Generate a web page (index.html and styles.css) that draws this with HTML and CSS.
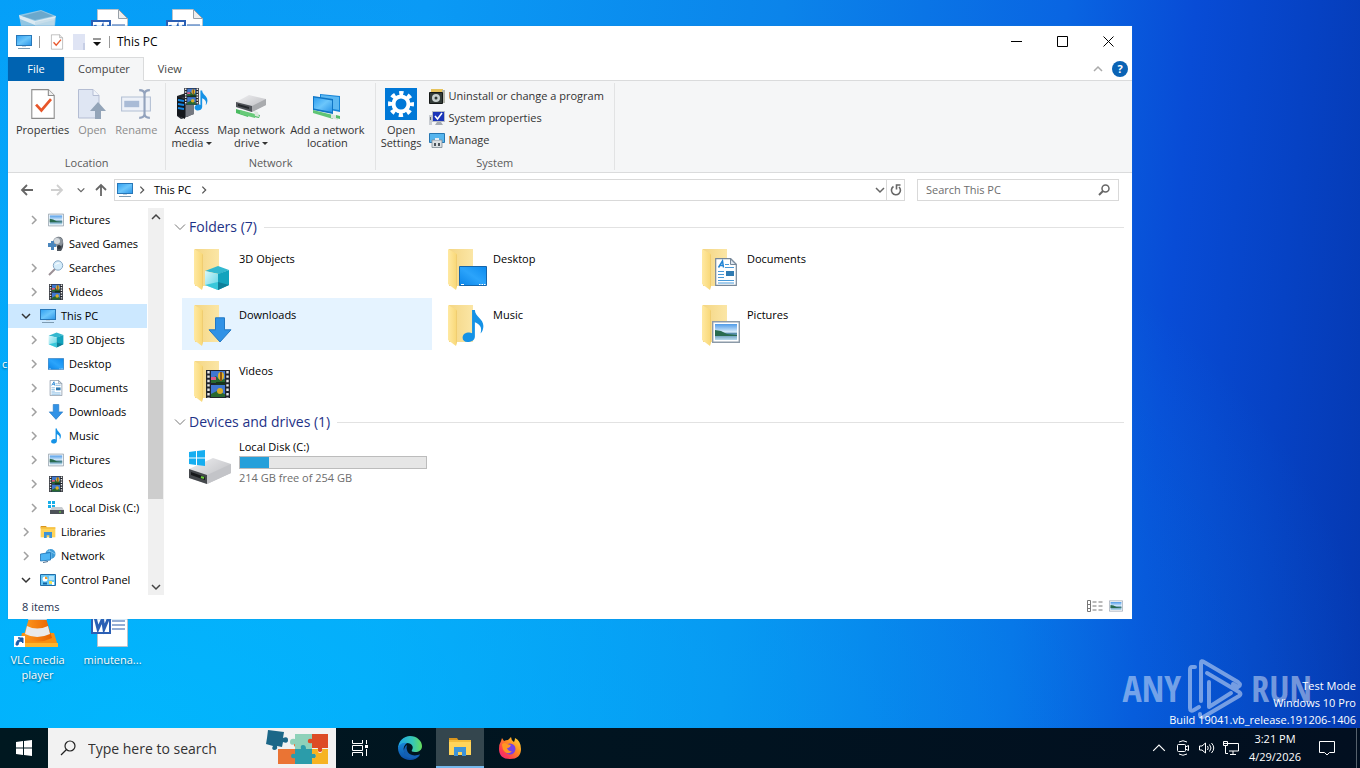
FILE: index.html
```html
<!DOCTYPE html>
<html lang="en">
<head>
    <meta charset="UTF-8">
    <meta name="viewport" content="width=device-width, initial-scale=1.0">
    <title>This PC</title>
    <link rel="stylesheet" href="styles.css">
</head>
<body>
    <!-- Icon sprite -->
    <svg class="sprite" aria-hidden="true">
        <defs>
            <linearGradient id="gScreen" x1="0" y1="0" x2="1" y2="1"><stop offset="0" stop-color="#2f9ff0"/><stop offset=".5" stop-color="#6cc6fb"/><stop offset="1" stop-color="#2b95e8"/></linearGradient>
            <linearGradient id="gBlue" x1="0" y1="1" x2="1" y2="0"><stop offset="0" stop-color="#0a84e8"/><stop offset=".5" stop-color="#2ba4fb"/><stop offset="1" stop-color="#0d8bee"/></linearGradient>
            <linearGradient id="gFolder" x1="0" y1="0" x2="1" y2="0"><stop offset="0" stop-color="#f4d684"/><stop offset="1" stop-color="#fbe6a6"/></linearGradient>
            <linearGradient id="gFlap" x1="0" y1="0" x2="1" y2="0"><stop offset="0" stop-color="#ffe9a2"/><stop offset="1" stop-color="#f8d775"/></linearGradient>
            <linearGradient id="gCube" x1="0" y1="0" x2="1" y2="1"><stop offset="0" stop-color="#d8f7fb"/><stop offset="1" stop-color="#59d3e4"/></linearGradient>
            <linearGradient id="gSky" x1="0" y1="0" x2="0" y2="1"><stop offset="0" stop-color="#4f9be8"/><stop offset=".5" stop-color="#d9ecfa"/><stop offset=".6" stop-color="#4d86a5"/><stop offset="1" stop-color="#b9dcf0"/></linearGradient>
            <linearGradient id="gDisk" x1="0" y1="0" x2="1" y2="1"><stop offset="0" stop-color="#f0f0f2"/><stop offset="1" stop-color="#b6b7bb"/></linearGradient>
            <linearGradient id="gEdge" x1="0" y1="0" x2="1" y2="0"><stop offset="0" stop-color="#1fa5e8"/><stop offset=".6" stop-color="#35c6b8"/><stop offset="1" stop-color="#66dd5c"/></linearGradient>
            <linearGradient id="gEdge2" x1="0" y1="0" x2="0" y2="1"><stop offset="0" stop-color="#1787d8"/><stop offset="1" stop-color="#0c4fa8"/></linearGradient>
            <linearGradient id="gFox" x1="1" y1="0" x2="0" y2="1"><stop offset="0" stop-color="#ffe23b"/><stop offset=".4" stop-color="#ff8f1f"/><stop offset=".75" stop-color="#ff3a52"/><stop offset="1" stop-color="#e6208c"/></linearGradient>
            <linearGradient id="gCone" x1="0" y1="0" x2="1" y2="0"><stop offset="0" stop-color="#ff9a1e"/><stop offset="1" stop-color="#e86200"/></linearGradient>
        </defs>
        <symbol id="monitor" viewBox="0 0 16 16">
            <rect x=".5" y="1.5" width="15" height="10" fill="url(#gScreen)" stroke="#2877b8"/>
            <path d="M6 12h4v1H6z" fill="#c6d5e0"/><path d="M2 14.5h12" stroke="#7d9bb2"/>
        </symbol>
        <symbol id="pagecheck" viewBox="0 0 24 30">
            <path d="M1.5 1.5H17l5.5 5.5v21.5h-21z" fill="#fff" stroke="#8b8b8b"/>
            <path d="M17 1.5V7h5.5" fill="#eee" stroke="#8b8b8b"/>
            <path d="M5.5 15.5l5 5.5 9-10.5" fill="none" stroke="#e8562a" stroke-width="2.5"/>
        </symbol>
        <symbol id="pageopen" viewBox="0 0 30 32">
            <path d="M1.5 1.5H16l6 6v22.5H1.5z" fill="#dfe6f3" stroke="#b4bdd3"/>
            <path d="M16 1.5v6h6" fill="#f1f4fa" stroke="#b4bdd3"/>
            <path d="M21 14l8 9h-5v8h-6v-8h-5z" fill="#93a4b8"/>
        </symbol>
        <symbol id="rename" viewBox="0 0 30 30">
            <path d="M1.5 8.5h27v13h-27z" fill="#edf1f8" stroke="#b2bfd4"/>
            <path d="M4 12h14v6H4z" fill="#a9bbd6"/>
            <path d="M18 2q5 0 5 4 0-4 5-4M18 28q5 0 5-4 0 4 5 4M23 5v20" fill="none" stroke="#93a3bd" stroke-width="2"/>
        </symbol>
        <symbol id="film" viewBox="0 0 24 28">
            <path d="M0 0h24v28H0z" fill="#20242c"/>
            <path d="M5 1h14v12H5z" fill="#3f77d0"/><path d="M5 15h14v12H5z" fill="#3f77d0"/>
            <path d="M5 9l5-3 4 4 5-1v4H5z" fill="#28682f"/><path d="M5 24l6-3 8 3v3H5z" fill="#28682f"/>
            <path d="M5 7h5v3H5z" fill="#dd5b86"/><ellipse cx="15" cy="6" rx="3" ry="4" fill="#e4b628"/><path d="M14 2h2v9h-2z" fill="#8a5518"/>
            <ellipse cx="14" cy="21" rx="3" ry="3" fill="#d9ad27"/><path d="M10 12h9v3h-9z" fill="#17351b"/>
            <path d="M2.5 1v27M21.5 1v27" stroke="#e9e9e9" stroke-width="2.4" stroke-dasharray="2.4 2"/>
        </symbol>
        <symbol id="note" viewBox="0 0 24 36">
            <path d="M11 1h3c0 7 9 9 9 17 0 3-1 6-3 8 2-7-1-10-6-12v15c0 4-4 6-8 6-3 0-5-2-5-4.5C1 27 4 25 8 25c1 0 2 .3 3 .7z" fill="#1592e6"/>
        </symbol>
        <symbol id="media" viewBox="0 0 32 32">
            <path d="M1 8l12-4v24L5 31l-4-3z" fill="#22262d"/><path d="M5 10l13-4v20L5 31z" fill="#43474f"/>
            <path d="M1 9l8 2v20l-8-4z" fill="#14171c"/><path d="M2 12l6 1M2 16l6 1M2 20l6 1" stroke="#1587e4" stroke-width="2"/><path d="M10 9l8-3v20l-8 3z" fill="#757981"/>
            <svg x="8" y="0" width="15" height="17"><use href="#film"/></svg>
            <svg x="18" y="1" width="14" height="23"><use href="#note"/></svg>
        </symbol>
        <symbol id="netdrive" viewBox="0 0 32 24">
            <path d="M1 8L14 1l17 4v6l-14 7L1 13z" fill="url(#gDisk)"/><path d="M1 8l16 4v6L1 13z" fill="#505359"/><path d="M3 10l11 3v2L3 12z" fill="#23262a"/>
            <path d="M17 12l14-7v6l-14 7z" fill="#a9abae"/>
            <path d="M1 15l13 4-1 4-12-4zM20 20l5 1-1 3-5-1z" fill="#4bbb62"/><path d="M5 16l15 4v4L5 20z" fill="#68ca79"/><path d="M19 17l4 1 1 5-4-1z" fill="#dce6dd"/>
        </symbol>
        <symbol id="netplace" viewBox="0 0 30 28">
            <path d="M8 2l20 2v16l-20-4z" fill="#1685d8"/><path d="M9 3l18 2v13L9 15z" fill="#5cb8f2"/>
            <path d="M1 4l20 3v15L1 18z" fill="#0f75c5"/><path d="M2 5.5l18 3V20L2 16.5z" fill="url(#gScreen)"/>
            <path d="M1 18l20 5v4L1 21z" fill="#5fc575"/><path d="M19 22l7 2v4l-7-2z" fill="#dbe5dc"/><path d="M24 23l4 1v3l-4-1z" fill="#57bd6c"/>
        </symbol>
        <symbol id="gear" viewBox="0 0 32 32">
            <path d="M0 0h32v32H0z" fill="#0078d7"/>
            <circle cx="16" cy="16" r="7.5" fill="none" stroke="#fff" stroke-width="4"/>
            <circle cx="16" cy="16" r="10.8" fill="none" stroke="#fff" stroke-width="4.4" stroke-dasharray="4.24 4.24" stroke-dashoffset="2.1"/>
        </symbol>
        <symbol id="uninstall" viewBox="0 0 16 16">
            <path d="M2 1h12v3H2z" fill="#e6c35c"/><path d="M13 2h3v13h-3z" fill="#b4b6ad"/><path d="M.5 4.5h13v11H.5z" fill="#333b38" stroke="#151817"/>
            <circle cx="7" cy="10" r="4" fill="#c9d1cf"/><circle cx="7" cy="10" r="1.5" fill="#333b38"/>
        </symbol>
        <symbol id="sysprops" viewBox="0 0 16 16">
            <path d="M3.5 1.5h12v10h-12z" fill="#1b35b8" stroke="#b9bdc4"/><path d="M6 6l2.5 3L13 3" fill="none" stroke="#fff" stroke-width="1.6"/>
            <path d="M8 12h4l2 3H6z" fill="#a5abb3"/><path d="M0 5h3v10H0z" fill="#c8ccd1"/><path d="M1 7h1v3H1z" fill="#666"/>
        </symbol>
        <symbol id="manage" viewBox="0 0 16 16">
            <path d="M.5 1.5h15v9H.5z" fill="#55b5ee" stroke="#2677b2"/>
            <path d="M3 8h10v7.5H3z" fill="#dce1e4" stroke="#7e8b94" stroke-width=".8"/><path d="M6 6h4v2H6z" fill="#e9eef1"/><path d="M5 11h2v3H5zM9 11h2v3H9z" fill="#4d555c"/>
        </symbol>
        <symbol id="picture" viewBox="0 0 28 22">
            <path d="M.7.7h26.6v20.6H.7z" fill="#fff" stroke="#8c9aa8" stroke-width="1.4"/><path d="M3 3h22v16H3z" fill="url(#gSky)"/>
            <path d="M3 9l6 1 6 3 10 1v1H3z" fill="#286b4f"/>
        </symbol>
        <symbol id="games" viewBox="0 0 16 16">
            <path d="M9 1q5-1 6 4 1 6-2 10l-4 0z" fill="#4d545c"/><circle cx="10" cy="6" r="5" fill="#8b939b"/><circle cx="9" cy="5" r="3" fill="#d3d9de"/>
            <path d="M0 7h3V5h3v3h2v3H6v3H3v-3H0z" fill="#4a86bd"/><circle cx="11" cy="11" r="2" fill="#2f343b"/>
        </symbol>
        <symbol id="searches" viewBox="0 0 16 16">
            <path d="M1 15l6-6" stroke="#9a8f95" stroke-width="2"/><circle cx="10" cy="5.5" r="4.7" fill="#d5ecfa" stroke="#88a9c6"/><path d="M7.5 5q1-2.5 4-2" fill="none" stroke="#fff"/>
        </symbol>
        <symbol id="cube" viewBox="0 0 26 26">
            <path d="M1 6L14 1l11 4-10 4z" fill="#33b8cf"/><path d="M1 6l13 3v16L1 20z" fill="url(#gCube)"/><path d="M14 9l11-4v15l-11 5z" fill="#13a3bd"/><path d="M14 17l11 3-11 5z" fill="#0e7f99"/><path d="M1 20l13-3v8z" fill="#38c7da"/>
        </symbol>
        <symbol id="desk" viewBox="0 0 28 20">
            <path d="M.5.5h27v19H.5z" fill="url(#gBlue)" stroke="#1565ab"/><path d="M2 18.5h3M20 18.5h1.5M22.5 18.5H24M25 18.5h1.5" stroke="#fff"/>
        </symbol>
        <symbol id="doc" viewBox="0 0 22 28">
            <path d="M.7.7h15l5.6 5.6v21H.7z" fill="#fff" stroke="#768799" stroke-width="1.2"/><path d="M15.5 1v5.5H21z" fill="#dfe7ef" stroke="#768799"/>
            <path d="M3.5 9.5L7.5 3l1 6.5M5 7.5h3.5" fill="none" stroke="#2083d4" stroke-width="1.5"/>
            <path d="M10 6.5h4M10 9.5h9M3 13.5h6M3 16.5h6M3 19.5h6M3 22.5h16M3 25h16" stroke="#4a9ad8"/><path d="M11 13h8v5h-8z" fill="#2f7ab1"/>
        </symbol>
        <symbol id="down" viewBox="0 0 24 26">
            <path d="M7.5.8h9v12h6.5L12 25 1 12.8h6.5z" fill="#3192e6" stroke="#2278c4"/>
        </symbol>
        <symbol id="winlogo" viewBox="0 0 16 16">
            <path d="M0 2l7-1v6.5H0zM8 .9L16 0v7.5H8zM0 8.5h7V15l-7-1zM8 8.5h8V16l-8-.9z"/>
        </symbol>
        <symbol id="disk" viewBox="0 0 48 40">
            <path d="M2 22L26 11l18 6v9L20 37 2 31z" fill="url(#gDisk)"/><path d="M2 22l18 6v9L2 31z" fill="#45484c"/><path d="M20 28l24-11v9L20 37z" fill="#c3c4c8"/>
            <path d="M4 25l14 5v3L4 28z" fill="#17191b"/><path d="M14 30l3 1" stroke="#6fd23c" stroke-width="2"/>
            <svg x="2" y="3" width="16" height="16" fill="#16aef0"><use href="#winlogo"/></svg>
        </symbol>
        <symbol id="disksmall" viewBox="0 0 16 16">
            <path d="M0 1h3v3H0zM4 1h3v3H4zM0 5h3v3H0zM4 5h3v3H4z" fill="#18aee8"/><path d="M2 10l2-3h10l2 3z" fill="#c8cbcf"/><path d="M2 10h14v4H2z" fill="#4d5258"/><path d="M11 12h2" stroke="#6de03e"/>
        </symbol>
        <symbol id="library" viewBox="0 0 24 20">
            <path d="M1 1h8l2 3H1z" fill="#d9951d"/><path d="M1 3h22v15H1z" fill="#ffd45a"/><path d="M1 3h22v2H1z" fill="#f3bc3b"/><path d="M6 19v-9h12v9h-4v-4h-4v4z" fill="#3d93d8"/>
        </symbol>
        <symbol id="network" viewBox="0 0 16 16">
            <circle cx="10.5" cy="6" r="5" fill="#3d9bd8"/><path d="M7 3q4 0 8 3M9 1q3 5 2 9" fill="none" stroke="#7cc3ec"/>
            <path d="M.5 6l10-1.5V12L.5 13z" fill="#4cb4f4" stroke="#1d71b3" stroke-width=".8"/><path d="M3 14.5l5-1" stroke="#4b6f91"/>
        </symbol>
        <symbol id="control" viewBox="0 0 16 14">
            <path d="M.5 1.5h15v11H.5z" fill="#64c5f5" stroke="#236ea8"/><circle cx="5" cy="6" r="2.5" fill="#fff"/><path d="M5 6V3.5A2.5 2.5 0 0 1 7.5 6z" fill="#f29b27"/>
            <path d="M9 4h5M9 6h5" stroke="#fff"/><path d="M3 10.5h4" stroke="#1464a2" stroke-width="2"/><path d="M9 8h3v3H9z" fill="#f3e15a"/><path d="M12 9h2v3h-2z" fill="#fff"/>
        </symbol>
        <symbol id="folder" viewBox="0 0 48 48">
            <path d="M8 3h24v37H8z" fill="url(#gFolder)"/><path d="M7 3l9 5v32l-1 4-8-6z" fill="url(#gFlap)"/><path d="M15 8v35l1-4V9z" fill="#f0cd70"/>
        </symbol>
        <symbol id="chev-r" viewBox="0 0 12 12"><path d="M4 2l4 4-4 4" fill="none" stroke="currentColor" stroke-width="1.5"/></symbol>
        <symbol id="chev-d" viewBox="0 0 12 12"><path d="M2 4l4 4 4-4" fill="none" stroke="currentColor" stroke-width="1.5"/></symbol>
        <symbol id="chev-u" viewBox="0 0 12 12"><path d="M2 8l4-4 4 4" fill="none" stroke="currentColor" stroke-width="1.5"/></symbol>
        <symbol id="arrow" viewBox="0 0 14 14"><path d="M13 7H2M7 2L2 7l5 5" fill="none" stroke="currentColor" stroke-width="1.8"/></symbol>
        <symbol id="loupe" viewBox="0 0 16 16"><circle cx="10" cy="6" r="5" fill="none" stroke="currentColor" stroke-width="1.2"/><path d="M6.500 9.500L1 15" stroke="currentColor" stroke-width="1.2"/></symbol>
        <symbol id="word" viewBox="0 0 48 48">
            <path d="M8.5 1.5h21l9 9V46.5h-30z" fill="#fff" stroke="#b9c3cc"/><path d="M29.5 1.5v9h9z" fill="#eee" stroke="#98a0a8"/>
            <path d="M23 17h13M23 21h13M23 25h13M23 29h13" stroke="#2a5caa" stroke-width="1.2"/>
            <path d="M2 12h20v22H2z" fill="#2b5fb4"/><path d="M4 14h18v18H4z" fill="#fff"/>
            <path d="M6 17l3 12 4.5-10 1.5 10 5-12" fill="none" stroke="#2b5fb4" stroke-width="3"/><path d="M20 12h2v22h-2z" fill="#2b5fb4"/>
        </symbol>
        <symbol id="bin" viewBox="0 0 48 48">
            <path d="M5 7l22-5 15 6-4 38H12z" fill="#9fc9e0" opacity=".9"/><path d="M5 7l16 6 21-5-2 4-19 5L6 11z" fill="#dceaf2"/><path d="M8 8l19-5 12 5-18 4z" fill="#6ba8cc"/><path d="M21 14v32l17-4 3-32z" fill="#c2dbe8" opacity=".8"/>
        </symbol>
        <symbol id="cone" viewBox="0 0 48 48">
            <path d="M8 33h32l4 13H5z" fill="#f79013"/><path d="M5 43h39v4H5z" fill="#ffb52b"/><path d="M20 2h7l11 36q-14 7-29 0z" fill="url(#gCone)"/>
            <path d="M17 12h13l3 8H14zM13 26q10 5 21 0l2 8q-13 6-25 0z" fill="#eaeaea"/>
            <path d="M0 36h11v11H0z" fill="#fff"/><path d="M2 45q0-5 4-5v-2h-2 5v5l-2-2q-3 0-3 4z" fill="#1b5aa8" stroke="#1b5aa8"/>
        </symbol>
    </svg>

    <main class="desktop">
        <!-- Desktop icons -->
        <div class="shortcuts">
            <a class="shortcut" href="#"><svg class="i48"><use href="#bin"/></svg></a>
            <a class="shortcut" href="#"><svg class="i48"><use href="#word"/></svg></a>
            <a class="shortcut" href="#"><svg class="i48"><use href="#word"/></svg></a>
            <a class="shortcut cut" href="#">c</a>
            <a class="shortcut" href="#"><svg class="i48"><use href="#cone"/></svg>VLC media player</a>
            <a class="shortcut" href="#"><svg class="i48"><use href="#word"/></svg>minutena...</a>
        </div>

        <!-- Explorer window -->
        <section class="window">
            <header class="titlebar">
                <svg class="i16"><use href="#monitor"/></svg>
                <span class="sep"></span>
                <button class="quick" aria-label="Properties"><svg class="i16"><use href="#pagecheck"/></svg></button>
                <button class="quick" aria-label="New folder"><svg class="i16" viewBox="0 0 16 16"><path d="M2 0h12v16H2z" fill="#dfe4f4"/><path d="M12 9h2v7h-2z" fill="#c6cee5"/></svg></button>
                <button class="quick narrow" aria-label="Customize"><svg width="8" height="8" viewBox="0 0 8 8"><path d="M0 1h8" stroke="#333"/><path d="M0 4h8L4 8z" fill="#111"/></svg></button>
                <span class="sep"></span>
                <h1>This PC</h1>
                <div class="controls">
                    <button aria-label="Minimize"><svg width="11" height="11"><path d="M0 5.5h11" stroke="#000"/></svg></button>
                    <button aria-label="Maximize"><svg width="11" height="11"><path d="M.5.5h10v10H.5z" fill="none" stroke="#000"/></svg></button>
                    <button aria-label="Close"><svg width="11" height="11"><path d="M.5.5l10 10M10.5.5l-10 10" stroke="#000"/></svg></button>
                </div>
            </header>

            <nav class="tabs">
                <button class="tab file">File</button>
                <button class="tab active">Computer</button>
                <button class="tab">View</button>
                <button class="collapse" aria-label="Collapse ribbon"><svg class="i12"><use href="#chev-u"/></svg></button>
                <button class="help" aria-label="Help">?</button>
            </nav>

            <div class="ribbon">
                <div class="group">
                    <div class="group-body wide">
                        <button class="big"><svg class="i32"><use href="#pagecheck"/></svg>Properties</button>
                        <button class="big" disabled><svg class="i32"><use href="#pageopen"/></svg>Open</button>
                        <button class="big" disabled><svg class="i32"><use href="#rename"/></svg>Rename</button>
                    </div>
                    <span class="group-name">Location</span>
                </div>
                <div class="group">
                    <div class="group-body">
                        <button class="big"><svg class="i32"><use href="#media"/></svg>Access<span>media <i class="caret"></i></span></button>
                        <button class="big"><svg class="i32 low"><use href="#netdrive"/></svg>Map network<span>drive <i class="caret"></i></span></button>
                        <button class="big"><svg class="i32 low"><use href="#netplace"/></svg>Add a network<span>location</span></button>
                    </div>
                    <span class="group-name">Network</span>
                </div>
                <div class="group">
                    <div class="group-body">
                        <button class="big"><svg class="i32"><use href="#gear"/></svg>Open<span>Settings</span></button>
                        <div class="small-list">
                            <button><svg class="i16"><use href="#uninstall"/></svg>Uninstall or change a program</button>
                            <button><svg class="i16"><use href="#sysprops"/></svg>System properties</button>
                            <button><svg class="i16"><use href="#manage"/></svg>Manage</button>
                        </div>
                    </div>
                    <span class="group-name">System</span>
                </div>
            </div>

            <div class="address-row">
                <button class="nav" aria-label="Back"><svg class="i14"><use href="#arrow"/></svg></button>
                <button class="nav off forward" aria-label="Forward"><svg class="i14"><use href="#arrow"/></svg></button>
                <button class="nav recent" aria-label="Recent locations"><svg class="i10"><use href="#chev-d"/></svg></button>
                <button class="nav up" aria-label="Up"><svg class="i14"><use href="#arrow"/></svg></button>
                <div class="address">
                    <svg class="i16"><use href="#monitor"/></svg>
                    <svg class="i10 crumb-sep"><use href="#chev-r"/></svg>
                    <a href="#">This PC</a>
                    <svg class="i10 crumb-sep"><use href="#chev-r"/></svg>
                    <button class="drop" aria-label="Previous locations"><svg class="i12"><use href="#chev-d"/></svg></button>
                    <button class="refresh" aria-label="Refresh"><svg class="i12" viewBox="0 0 12 12"><path d="M3.500 2.500A4.500 4.500 0 1 0 9 3" fill="none" stroke="#666" stroke-width="1.6"/><path d="M10.500 1H6.500v4.500" fill="none" stroke="#666" stroke-width="1.6"/></svg></button>
                </div>
                <div class="search">
                    <input type="text" placeholder="Search This PC" aria-label="Search This PC">
                    <svg class="i12" viewBox="0 0 12 12" fill="none" stroke="currentColor"><circle cx="7.5" cy="4.5" r="3.5" stroke-width="1.5"/><path d="M5 7l-4 4" stroke-width="2"/></svg>
                </div>
            </div>

            <div class="body">
                <nav class="tree">
                    <a class="sub" href="#"><svg class="i12"><use href="#chev-r"/></svg><svg class="i16"><use href="#picture"/></svg>Pictures</a>
                    <a class="sub" href="#"><svg class="i12"></svg><svg class="i16"><use href="#games"/></svg>Saved Games</a>
                    <a class="sub" href="#"><svg class="i12"><use href="#chev-r"/></svg><svg class="i16"><use href="#searches"/></svg>Searches</a>
                    <a class="sub" href="#"><svg class="i12"><use href="#chev-r"/></svg><svg class="i16"><use href="#film"/></svg>Videos</a>
                    <a class="open selected" href="#"><svg class="i12"><use href="#chev-d"/></svg><svg class="i16"><use href="#monitor"/></svg>This PC</a>
                    <a class="sub" href="#"><svg class="i12"><use href="#chev-r"/></svg><svg class="i16"><use href="#cube"/></svg>3D Objects</a>
                    <a class="sub" href="#"><svg class="i12"><use href="#chev-r"/></svg><svg class="i16"><use href="#desk"/></svg>Desktop</a>
                    <a class="sub" href="#"><svg class="i12"><use href="#chev-r"/></svg><svg class="i16"><use href="#doc"/></svg>Documents</a>
                    <a class="sub" href="#"><svg class="i12"><use href="#chev-r"/></svg><svg class="i16"><use href="#down"/></svg>Downloads</a>
                    <a class="sub" href="#"><svg class="i12"><use href="#chev-r"/></svg><svg class="i16"><use href="#note"/></svg>Music</a>
                    <a class="sub" href="#"><svg class="i12"><use href="#chev-r"/></svg><svg class="i16"><use href="#picture"/></svg>Pictures</a>
                    <a class="sub" href="#"><svg class="i12"><use href="#chev-r"/></svg><svg class="i16"><use href="#film"/></svg>Videos</a>
                    <a class="sub" href="#"><svg class="i12"><use href="#chev-r"/></svg><svg class="i16"><use href="#disksmall"/></svg>Local Disk (C:)</a>
                    <a href="#"><svg class="i12"><use href="#chev-r"/></svg><svg class="i16"><use href="#library"/></svg>Libraries</a>
                    <a href="#"><svg class="i12"><use href="#chev-r"/></svg><svg class="i16"><use href="#network"/></svg>Network</a>
                    <a class="open" href="#"><svg class="i12"><use href="#chev-d"/></svg><svg class="i16"><use href="#control"/></svg>Control Panel</a>
                </nav>
                <div class="scrollbar">
                    <button aria-label="Scroll up"><svg class="i12"><use href="#chev-u"/></svg></button>
                    <div class="track"><div class="thumb"></div></div>
                    <button aria-label="Scroll down"><svg class="i12"><use href="#chev-d"/></svg></button>
                </div>

                <div class="content">
                    <h2><svg class="i12" viewBox="0 0 12 12"><path d="M1 3.5l5 5 5-5" fill="none" stroke="currentColor"/></svg>Folders (7)</h2>
                    <div class="tiles">
                        <a class="tile" href="#"><svg class="i48" viewBox="0 0 48 48"><use href="#folder"/><svg x="17" y="19" width="26" height="26"><use href="#cube"/></svg></svg>3D Objects</a>
                        <a class="tile" href="#"><svg class="i48" viewBox="0 0 48 48"><use href="#folder"/><svg x="18" y="20" width="28" height="20"><use href="#desk"/></svg></svg>Desktop</a>
                        <a class="tile" href="#"><svg class="i48" viewBox="0 0 48 48"><use href="#folder"/><svg x="20" y="12" width="22" height="28"><use href="#doc"/></svg></svg>Documents</a>
                        <a class="tile hover" href="#"><svg class="i48" viewBox="0 0 48 48"><use href="#folder"/><svg x="21" y="15" width="24" height="26"><use href="#down"/></svg></svg>Downloads</a>
                        <a class="tile" href="#"><svg class="i48" viewBox="0 0 48 48"><use href="#folder"/><svg x="20" y="7" width="24" height="34"><use href="#note"/></svg></svg>Music</a>
                        <a class="tile" href="#"><svg class="i48" viewBox="0 0 48 48"><use href="#folder"/><svg x="17" y="19" width="28" height="22"><use href="#picture"/></svg></svg>Pictures</a>
                        <a class="tile" href="#"><svg class="i48" viewBox="0 0 48 48"><use href="#folder"/><svg x="19" y="12" width="24" height="28"><use href="#film"/></svg></svg>Videos</a>
                    </div>
                    <h2><svg class="i12" viewBox="0 0 12 12"><path d="M1 3.5l5 5 5-5" fill="none" stroke="currentColor"/></svg>Devices and drives (1)</h2>
                    <div class="tiles">
                        <div class="tile drive">
                            <svg class="i48"><use href="#disk"/></svg>
                            <div class="drive-info">
                                <label for="usage">Local Disk (C:)</label>
                                <progress id="usage" max="254" value="40"></progress>
                                <span>214 GB free of 254 GB</span>
                            </div>
                        </div>
                    </div>
                </div>
            </div>

            <footer class="status">
                <span>8 items</span>
                <button aria-label="Details view"><svg width="16" height="12" viewBox="0 0 16 12"><path d="M.5.5h3v11h-3zM.5 4.5h3M.5 8.5h3" fill="none" stroke="#777"/><path d="M5.5 2h4M11.5 2h4M5.5 6h4M11.5 6h4M5.5 10h4M11.5 10h4" stroke="#777"/></svg></button>
                <button aria-label="Large icons"><svg width="14" height="12"><use href="#picture"/></svg></button>
            </footer>
        </section>

        <!-- Watermark -->
        <div class="watermark">
            <span>ANY</span>
            <svg width="58" height="62" viewBox="0 0 58 62" fill="none" stroke="currentColor" stroke-width="4" stroke-linejoin="round" stroke-linecap="round">
                <path d="M8 9H5q-2 0-2 3v38q0 4 4 2l5-3M14 43V5q0-3 3-1l34 20q4 3 0 5l-5-3M20 15l32 19q3 2 0 4L18 58q-5 3-5-2M22 24v25l22-14"/>
            </svg>
            <span>RUN</span>
        </div>
        <div class="build">
            <p>Test Mode</p>
            <p>Windows 10 Pro</p>
            <p>Build 19041.vb_release.191206-1406</p>
        </div>
    </main>

    <footer class="taskbar">
        <button class="task" aria-label="Start"><svg class="i16" fill="#fff"><use href="#winlogo"/></svg></button>
        <div class="task-search">
            <svg class="i16"><use href="#loupe"/></svg>
            <input type="text" placeholder="Type here to search" aria-label="Type here to search">
            <svg width="64" height="36" viewBox="0 0 64 36">
                <path d="M13 19h17v-2q-3-3 1-5 5-1 4 3-1 2 1 3v16H13z" fill="#ea7434"/>
                <path d="M30 4h17v15H30v-5q-5 2-5-2t5-3z" fill="#8ed1b9"/>
                <path d="M47 4h16v14h-6q1 4-2 4t-2-4h-6v-5q-5 1-4-3 1-2 4-1z" fill="#dd4b26"/>
                <path d="M30 19h6q-1-4 2-4t3 4h6v5q4-2 4 2t-4 2v6H30v-6q-4 1-4-2t4-2z" fill="#2b9caa"/>
                <path d="M47 19h6q-1 4 2 4t2-4h6v15H47v-6q4 1 4-2t-4-2z" fill="#f6b322"/>
                <path d="M3 0l16 2-1 6q5-2 5 2t-5 2l-1 5-5-1q1 4-3 4-3-1-1-4l-7-2 1-6z" fill="#1c6788"/>
            </svg>
        </div>
        <button class="task" aria-label="Task view"><svg class="i16" viewBox="0 0 16 16" fill="none" stroke="#fff"><path d="M.5 0v3.5h10V0M.5 16v-3.5h10V16M.5 5.5h10v5H.5zM14.5 0v4M14.5 9v7"/><path d="M13 5h3v3h-3z" fill="#fff" stroke="none"/></svg></button>
        <button class="task" aria-label="Edge"><svg class="i24" viewBox="0 0 24 24">
            <path d="M0 13C0 5 6 0 12 0c7 0 12 5 12 10 0 4-3 6-7 6-3 0-4-1-3-2 2-3 0-7-5-7-5 0-8 3-9 6z" fill="url(#gEdge)"/>
            <path d="M0 12c1-4 5-6 9-5-3 2-4 5-3 8 1 4 5 6 9 6 3 0 5-1 7-2-2 3-6 5-10 5C5 24 0 19 0 12z" fill="url(#gEdge2)"/>
            <path d="M9 9c-3 2-4 6-2 10 2 3 6 4 9 3 3 0 5-2 6-4-5 3-12 1-13-4-1-2 0-4 0-5z" fill="#1460b4"/>
        </svg></button>
        <button class="task running" aria-label="File Explorer"><svg class="i24"><use href="#library"/></svg></button>
        <button class="task" aria-label="Firefox"><svg class="i24" viewBox="0 0 24 24">
            <path d="M3 5l1-3 2 3q2-1 4-1l3-3q0 3 3 5 1-2 1-4 6 3 6 11 0 10-11 10T1 13q0-5 2-8z" fill="url(#gFox)"/>
            <circle cx="12" cy="13" r="5.5" fill="#7542e5"/><path d="M4 8q3-2 5 0l4 1q-1 3-4 3 1 4 5 3-3 4-7 1-3-3-3-8z" fill="#ff9722"/>
        </svg></button>
        <div class="tray">
            <button aria-label="Hidden icons"><svg width="14" height="14" viewBox="0 0 12 12"><path d="M1 8.5l5-5 5 5" fill="none" stroke="#fff"/></svg></button>
            <button aria-label="Meet now"><svg class="i16" viewBox="0 0 16 16" fill="none" stroke="#fff"><rect x="2.5" y="4.5" width="8" height="7" rx="1"/><path d="M10.5 7l3-1.5v5l-3-1.5M4 2q4-2.5 8 0M4 14q4 2.5 8 0"/></svg></button>
            <button aria-label="Volume"><svg class="i16" viewBox="0 0 16 16" fill="none" stroke="#fff"><path d="M.5 6v4H3l3.5 3V3L3 6zM8.5 6q1.5 2 0 4M10.5 4.5q3 3.5 0 7M12.5 3q4.5 5 0 10"/></svg></button>
            <button aria-label="Network"><svg class="i16" viewBox="0 0 16 16" fill="none" stroke="#fff"><path d="M5 3.5h10.5V11H6M7 14.5h6M10 11v3.5M.5 1.5h4v4h-4zM2.5 5.5v8H5M1 3.5h3"/></svg></button>
            <time class="clock" datetime="2026-04-29T15:21">3:21 PM<br>4/29/2026</time>
            <button class="notify" aria-label="Notifications"><svg class="i16" viewBox="0 0 16 16" fill="none" stroke="#fff"><path d="M.5 1.5h15v11h-5L8 15l-2.5-2.5h-5z"/></svg></button>
            <span class="show-desktop"></span>
        </div>
    </footer>
</body>
</html>
```
FILE: styles.css
```css
* {
    box-sizing: border-box;
}
body {
    margin: 0;
    min-height: 100vh;
    display: flex;
    flex-direction: column;
    font-family: 'Open Sans', 'Noto Sans', sans-serif;
    font-size: 11px;
    line-height: 13px;
    color: #1a1a1a;
}
button, input {
    font: inherit;
    color: inherit;
    border: none;
    background: none;
    padding: 0;
    margin: 0;
}
a {
    color: inherit;
    text-decoration: none;
}
h1, h2, p {
    margin: 0;
    font-weight: normal;
}
svg {
    display: block;
    flex: none;
}
.sprite {
    position: absolute;
    width: 0;
    height: 0;
}
.i10 { width: 10px; height: 10px; }
.i12 { width: 12px; height: 12px; }
.i14 { width: 14px; height: 14px; }
.i16 { width: 16px; height: 16px; }
.i24 { width: 24px; height: 24px; }
.i32 { width: 32px; height: 32px; }
.i48 { width: 48px; height: 48px; }

/* Desktop */
.desktop {
    position: relative;
    flex: 1;
    display: flex;
    overflow: hidden;
    background:
        radial-gradient(ellipse at 10% 100%, rgba(0, 190, 255, 0.75), transparent 72%),
        linear-gradient(95deg, #059ff8 0%, #0a9af5 30%, #0b84ea 55%, #0965e2 75%, #084cd6 84%, #0642c4 92%, #0538b0 100%);
}
.shortcuts {
    flex: 1;
    display: grid;
    grid-template-columns: repeat(3, 75px);
    grid-template-rows: 348px 244px 1fr;
    padding-top: 8px;
}
.shortcut {
    display: flex;
    flex-direction: column;
    align-items: center;
    text-align: center;
    line-height: 15px;
    padding: 0 8px;
    gap: 4px;
    color: #fff;
    text-shadow: 0 1px 2px rgba(0, 0, 0, 0.5);
}
.shortcut.cut {
    grid-column: 1 / -1;
    align-items: flex-start;
    padding: 0 2px;
}

/* Window */
.window {
    position: absolute;
    left: 8px;
    right: 228px;
    top: 26px;
    background: #fff;
    box-shadow: 0 0 1px #1883d7;
}
.titlebar {
    display: flex;
    align-items: center;
    height: 31px;
    padding: 0 1px 0 8px;
}
.titlebar h1 {
    font-size: 12px;
    margin-left: 7px;
    color: #000;
}
.sep {
    width: 1px;
    height: 12px;
    margin: 0 6px 0 7px;
    background: #999;
}
.sep:nth-of-type(2) {
    margin: 0 0 0 5px;
}
.quick {
    display: flex;
    justify-content: center;
    width: 22px;
}
.quick.narrow {
    width: 14px;
}
.controls {
    display: flex;
    margin-left: auto;
}
.controls button {
    display: flex;
    justify-content: center;
    align-items: center;
    width: 46px;
    height: 30px;
}
.tabs {
    display: flex;
    align-items: center;
    height: 24px;
    color: #444;
    border-bottom: 1px solid #dadbdc;
}
.tab {
    height: 24px;
    padding: 0 14px;
}
.tab.file {
    width: 56px;
    background: #0063b1;
    color: #fff;
}
.tab.active {
    padding: 0 13px;
    background: #f5f6f7;
    border: 1px solid #dadbdc;
    border-bottom-color: #f5f6f7;
}
.collapse {
    margin-left: auto;
    color: #aaa;
}
.help {
    width: 16px;
    height: 16px;
    margin: 0 4px 0 8px;
    border-radius: 50%;
    background: #0a63b5;
    color: #fff;
    font-weight: bold;
}

/* Ribbon */
.ribbon {
    display: flex;
    height: 92px;
    padding: 2px 0;
    background: #f5f6f7;
    border-bottom: 1px solid #dadbdc;
    color: #333;
}
.group {
    display: flex;
    flex-direction: column;
    justify-content: space-between;
    border-right: 1px solid #e2e3e4;
}
.group-body {
    display: flex;
    align-items: flex-start;
    gap: 5px;
    padding: 0 10px 0 5px;
}
.group-body.wide {
    gap: 7px;
    padding: 0 8px;
}
.group-name {
    text-align: center;
    padding-bottom: 1px;
    color: #5a5a5a;
}
.big {
    display: flex;
    flex-direction: column;
    align-items: center;
    padding-top: 5px;
    color: inherit;
}
.big svg {
    margin-bottom: 3px;
}
.big svg.low {
    padding-top: 4px;
}
.big:disabled {
    color: #8b8b8b;
}
.caret {
    display: inline-block;
    vertical-align: 2px;
    border: 3px solid transparent;
    border-top-color: #333;
    border-bottom: none;
}
.small-list {
    display: flex;
    flex-direction: column;
    padding: 2px 0 0 3px;
}
.small-list button {
    display: flex;
    align-items: center;
    gap: 3px;
    height: 22px;
    line-height: 14px;
}

/* Address row */
.address-row {
    display: flex;
    align-items: center;
    height: 35px;
    padding: 0 13px 2px 12px;
}
.nav {
    display: flex;
    color: #666;
    margin-right: 16px;
}
.nav.off {
    color: #d0d0d0;
}
.forward svg {
    transform: rotate(180deg);
}
.nav.forward {
    margin-right: 12px;
}
.nav.recent {
    margin-right: 8px;
}
.nav.up {
    margin-right: 6px;
}
.up svg {
    transform: rotate(90deg);
}
.address {
    flex: 1;
    display: flex;
    align-items: center;
    height: 22px;
    padding-left: 2px;
    border: 1px solid #d9d9d9;
    color: #000;
}
.crumb-sep {
    margin: 0 7px 0 4px;
    color: #555;
}
a + .crumb-sep {
    margin-left: 8px;
}
.drop {
    margin-left: auto;
    color: #666;
}
.refresh {
    display: flex;
    justify-content: center;
    align-items: center;
    align-self: stretch;
    width: 18px;
    border-left: 1px solid #d9d9d9;
}
.search {
    display: flex;
    align-items: center;
    width: 202px;
    height: 22px;
    margin-left: 12px;
    padding: 0 8px;
    border: 1px solid #d9d9d9;
    color: #666;
}
.search input {
    flex: 1;
    min-width: 0;
}
.search input::placeholder {
    color: #6d6d6d;
}

/* Navigation tree */
.body {
    display: flex;
}
.tree {
    width: 139px;
    padding-bottom: 3px;
    white-space: nowrap;
    line-height: 14px;
    color: #000;
}
.tree a {
    display: flex;
    align-items: center;
    height: 24px;
    padding-left: 12px;
}
.tree a.sub {
    padding-left: 20px;
}
.tree a.selected {
    background: #cce8ff;
}
.tree .i12 {
    color: #a0a0a0;
    margin-right: 8px;
}
.tree .open .i12 {
    color: #333;
}
.tree .i16 {
    margin-right: 5px;
}
.scrollbar {
    display: flex;
    flex-direction: column;
    width: 17px;
    margin-left: 1px;
    border-right: 1px solid #fff;
    background: #f0f0f0;
    color: #444;
}
.scrollbar button {
    display: flex;
    justify-content: center;
    align-items: center;
    height: 17px;
}
.track {
    flex: 1;
    display: flex;
    flex-direction: column;
    padding: 155px 1px 79px 0;
}
.thumb {
    flex: 1;
    background: #cdcdcd;
}

/* Content pane */
.content {
    flex: 1;
    padding: 4px 8px 0 9px;
}
.content h2 {
    display: flex;
    align-items: center;
    height: 30px;
    gap: 3px;
    font-size: 14px;
    line-height: 18px;
    color: #1e3287;
}
.content h2 svg {
    color: #777;
}
.content h2::after {
    content: '';
    flex: 1;
    height: 1px;
    margin-left: 4px;
    background: #e2e2e2;
}
.tiles {
    display: grid;
    grid-template-columns: repeat(auto-fill, 250px);
    gap: 4px;
    padding: 0 0 1px 8px;
}
.tile {
    display: flex;
    gap: 4px;
    height: 52px;
    padding: 10px 5px;
    color: #000;
}
.tile > svg {
    margin-top: -6px;
}
.tile.hover {
    background: #e5f3ff;
}
.tile.drive {
    padding: 3px 5px;
}
.tile.drive > svg {
    margin-top: 3px;
}
.drive-info {
    display: flex;
    flex-direction: column;
    flex: 1;
    color: #6d6d6d;
}
.drive-info label {
    color: #000;
}
.drive-info progress {
    appearance: none;
    width: 100%;
    height: 13px;
    margin: 3px 0 2px;
    border: 1px solid #bcbcbc;
}
.drive-info progress::-webkit-progress-bar {
    background: #e6e6e6;
}
.drive-info progress::-webkit-progress-value {
    background: #26a0da;
}
.status {
    display: flex;
    align-items: center;
    gap: 6px;
    height: 24px;
    padding: 0 9px 2px 14px;
    color: #1e3250;
}
.status span {
    flex: 1;
}

/* Watermark */
.watermark {
    position: absolute;
    right: 48px;
    bottom: 8px;
    display: flex;
    align-items: center;
    gap: 6px;
    font-family: 'Liberation Sans Narrow', 'Open Sans Condensed', 'Liberation Sans', sans-serif;
    font-weight: 300;
    font-size: 36px;
    line-height: 40px;
    color: rgba(255, 255, 255, 0.45);
}
.build {
    position: absolute;
    right: 4px;
    bottom: 0;
    text-align: right;
    line-height: 17px;
    color: #fff;
}

/* Taskbar */
.taskbar {
    display: flex;
    height: 40px;
    background: linear-gradient(90deg, #001820, #020f20);
    color: #fff;
}
.task {
    display: flex;
    justify-content: center;
    align-items: center;
    width: 48px;
    margin-right: 2px;
}
.task:first-child {
    margin-right: 0;
}
.task.running {
    background: #34464e;
    border-bottom: 2px solid #76b9ed;
}
.task-search {
    display: flex;
    align-items: center;
    width: 288px;
    padding: 0 7px 0 12px;
    gap: 12px;
    background: #f2f2f2;
    color: #222;
}
.task-search input {
    flex: 1;
    min-width: 0;
    font-size: 14px;
}
.task-search input::placeholder {
    color: #333;
}
.tray {
    display: flex;
    align-items: center;
    margin-left: auto;
}
.tray button {
    display: flex;
    justify-content: center;
    width: 24px;
}
.clock {
    width: 64px;
    text-align: center;
    line-height: 18px;
}
.tray .notify {
    width: 40px;
}
.show-desktop {
    align-self: stretch;
    width: 4px;
    margin-left: 9px;
    border-left: 1px solid #56616c;
}
```
